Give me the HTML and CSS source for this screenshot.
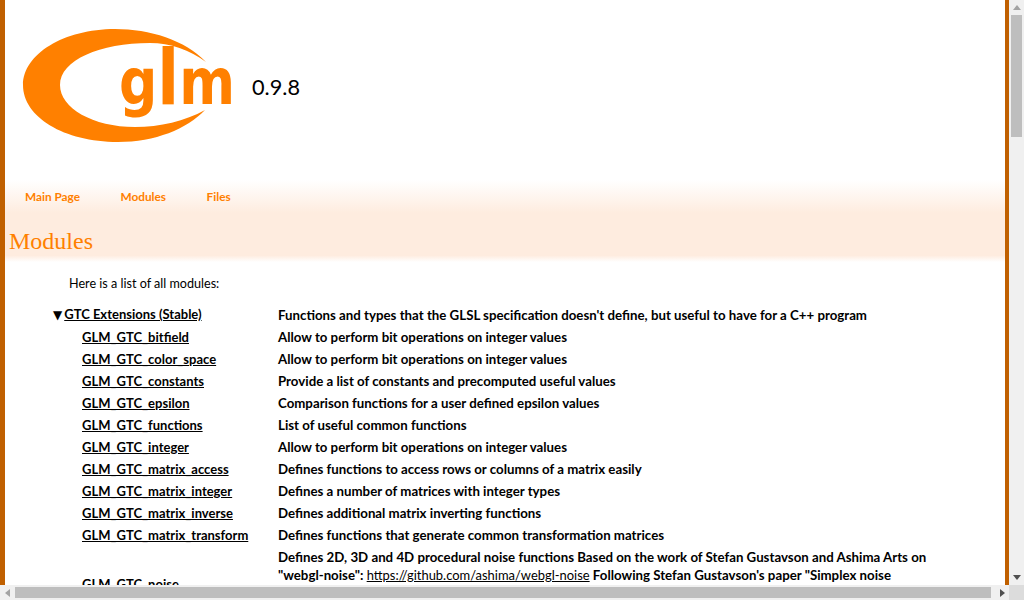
FILE: index.html
```html
<!DOCTYPE html>
<html lang="en">
<head>
  <meta charset="UTF-8">
  <title>GLM: Modules</title>
  <link rel="stylesheet" href="styles.css">
</head>
<body>
  <div class="window">
    <div class="page">
      <header class="top">
        <svg class="logo" width="220" height="116" viewBox="22 28 220 116">
          <path class="swoosh" d="M206 62C185 40 150 29 115 29C64 29 23 54 23 85C23 117 64 142 118 142C155 142 187 129 205 110C185 121 160 127 135 127C93 127 60 108 60 85C60 60 100 43 150 43C170 43 190 50 206 62Z"/>
          <text class="logo-text" x="119" y="104" textLength="116" lengthAdjust="spacingAndGlyphs">g<tspan class="logo-tall">l</tspan>m</text>
        </svg>
        <span class="version">0.9.8</span>
      </header>
      <div class="band">
        <nav class="tabs">
          <a href="#">Main Page</a>
          <a href="#">Modules</a>
          <a href="#">Files</a>
        </nav>
        <h1 class="title">Modules</h1>
      </div>
      <p class="intro">Here is a list of all modules:</p>
      <table class="modules">
        <tr><td class="name top-level"><span class="arrow">▼</span><a href="#">GTC Extensions (Stable)</a></td><td class="desc">Functions and types that the GLSL specification doesn't define, but useful to have for a C++ program</td></tr>
        <tr><td class="name"><a href="#">GLM_GTC_bitfield</a></td><td class="desc">Allow to perform bit operations on integer values</td></tr>
        <tr><td class="name"><a href="#">GLM_GTC_color_space</a></td><td class="desc">Allow to perform bit operations on integer values</td></tr>
        <tr><td class="name"><a href="#">GLM_GTC_constants</a></td><td class="desc">Provide a list of constants and precomputed useful values</td></tr>
        <tr><td class="name"><a href="#">GLM_GTC_epsilon</a></td><td class="desc">Comparison functions for a user defined epsilon values</td></tr>
        <tr><td class="name"><a href="#">GLM_GTC_functions</a></td><td class="desc">List of useful common functions</td></tr>
        <tr><td class="name"><a href="#">GLM_GTC_integer</a></td><td class="desc">Allow to perform bit operations on integer values</td></tr>
        <tr><td class="name"><a href="#">GLM_GTC_matrix_access</a></td><td class="desc">Defines functions to access rows or columns of a matrix easily</td></tr>
        <tr><td class="name"><a href="#">GLM_GTC_matrix_integer</a></td><td class="desc">Defines a number of matrices with integer types</td></tr>
        <tr><td class="name"><a href="#">GLM_GTC_matrix_inverse</a></td><td class="desc">Defines additional matrix inverting functions</td></tr>
        <tr><td class="name"><a href="#">GLM_GTC_matrix_transform</a></td><td class="desc">Defines functions that generate common transformation matrices</td></tr>
        <tr><td class="name"><a href="#">GLM_GTC_noise</a></td><td class="desc">Defines 2D, 3D and 4D procedural noise functions Based on the work of Stefan Gustavson and Ashima Arts on "webgl-noise": <a class="plain" href="#">https://github.com/ashima/webgl-noise</a> Following Stefan Gustavson's paper "Simplex noise<br>demystified":<br><a class="plain" href="#">http://www.itn.liu.se/~stegu/simplexnoise/simplexnoise.pdf</a></td></tr>
      </table>
    </div>
    <div class="vbar">
      <span class="arrow-up"></span>
      <span class="vthumb"></span>
      <span class="arrow-down"></span>
    </div>
  </div>
  <div class="hbar">
    <span class="arrow-left"></span>
    <span class="hthumb"></span>
    <span class="arrow-right"></span>
    <span class="corner"></span>
  </div>
</body>
</html>
```

FILE: styles.css
```css
html, body {
  margin: 0;
  padding: 0;
  height: 100%;
  overflow: hidden;
}

body {
  display: flex;
  flex-direction: column;
  font-family: Lato, sans-serif;
  font-size: 13px;
  color: #000;
  background: #f0f0f0;
}

.window {
  flex: 1;
  display: flex;
  min-height: 0;
}

.page {
  flex: 1;
  min-width: 0;
  overflow: hidden;
  background: #fff;
  border-left: 5px solid #c06000;
  border-right: 4px solid #c06000;
}

.top {
  display: flex;
  align-items: flex-start;
  height: 152px;
  padding: 28px 0 0 17px;
}

.swoosh {
  fill: #ff8000;
}

.logo-text {
  fill: #ff8000;
  font-family: "DejaVu Sans", sans-serif;
  font-size: 64px;
  font-weight: 700;
}

.logo-tall {
  font-size: 76px;
}

.version {
  margin: 46px 0 0 10px;
  font-size: 21.7px;
}

.band {
  height: 82px;
  background: linear-gradient(#fff, #feecdf 40%, #feecdf 92%, #fff);
}

.tabs {
  display: flex;
  gap: 40.5px;
  padding: 9px 0 0 20px;
  font-size: 11.8px;
}

.tabs a {
  color: #ff8000;
  font-weight: 700;
  text-decoration: none;
}

.title {
  margin: 24px 0 0 4px;
  color: #ff8000;
  font-family: "Liberation Serif", serif;
  font-size: 24px;
  font-weight: 400;
}

.intro {
  margin: 14px 0 0 64px;
  font-size: 12.6px;
}

.modules {
  margin: 12px 0 0 45px;
  border-collapse: collapse;
  font-weight: 700;
}

.modules td {
  padding: 2px 4px;
  line-height: 18px;
}

.modules .name {
  width: 188px;
  padding-left: 32px;
  white-space: nowrap;
}

.modules .top-level {
  padding-left: 3px;
}

.desc {
  width: 664px;
  font-size: 13.28px;
}

.arrow {
  margin-right: 2px;
  font-family: "DejaVu Sans", sans-serif;
  font-size: 12px;
}

.modules a {
  color: #000;
}

.modules .plain {
  font-weight: 400;
  font-size: 12.95px;
}

.vbar {
  width: 15px;
  flex: none;
  display: flex;
  flex-direction: column;
  align-items: center;
  position: relative;
}

.vthumb {
  width: 11px;
  height: 122px;
  margin-top: 15px;
  background: #bebebe;
}

.arrow-up,
.arrow-down,
.arrow-left,
.arrow-right {
  position: absolute;
  width: 0;
  height: 0;
  border-style: solid;
  border-color: transparent;
}

.arrow-up {
  top: 5px;
  border-width: 0 4px 5px;
  border-bottom-color: #a3a3a3;
}

.arrow-down {
  bottom: 5px;
  border-width: 5px 4px 0;
  border-top-color: #505050;
}

.hbar {
  flex: none;
  height: 15px;
  display: flex;
  align-items: center;
  position: relative;
}

.hthumb {
  width: 976px;
  height: 11px;
  margin-left: 15px;
  background: #bebebe;
}

.arrow-left {
  left: 5px;
  border-width: 4px 5px 4px 0;
  border-right-color: #a3a3a3;
}

.arrow-right {
  left: 1000px;
  border-width: 4px 0 4px 5px;
  border-left-color: #505050;
}

.corner {
  margin-left: auto;
  width: 15px;
  height: 15px;
  background: #dcdcdc;
}
```
